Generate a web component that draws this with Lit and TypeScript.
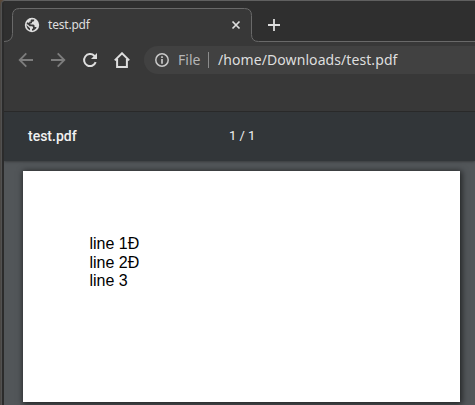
import { LitElement, html, css } from "lit";
import { customElement } from "lit/decorators.js";

@customElement("browser-tabs")
class BrowserTabs extends LitElement {
  static styles = css`
    :host { display: block; height: 41px; background: #2f2f2f; position: relative; }
    .outline { position: absolute; inset: 0; width: 471px; height: 41px; }
    .row { position: relative; display: flex; align-items: center; height: 41px; padding: 7px 0 0 20px; box-sizing: border-box; }
    .globe { width: 16px; height: 16px; flex: none; }
    .title { font: 12px/16px "Noto Sans", sans-serif; letter-spacing: -.2px; color: #dedede; margin-left: 8px; width: 182px; }
    .close { width: 10px; height: 10px; flex: none; margin-left: 1px; }
    .add { width: 12px; height: 12px; flex: none; margin-left: 27px; }
  `;
  render() {
    return html`
      <svg class="outline" viewBox="0 0 471 41">
        <path d="M0 40.5 Q8.5 40.5 8.5 32.5 V14.5 Q8.5 7.5 15.5 7.5 H240.5 Q247.5 7.5 247.5 14.5 V33.5 Q247.5 40.5 254.5 40.5 H471 V41 H0Z" fill="#383838"/>
        <path d="M0 40.5 Q8.5 40.5 8.5 32.5 V14.5 Q8.5 7.5 15.5 7.5 H240.5 Q247.5 7.5 247.5 14.5 V33.5 Q247.5 40.5 254.5 40.5 H471" fill="none" stroke="#696969"/>
      </svg>
      <div class="row">
        <svg class="globe" viewBox="0 0 16 16">
          <circle cx="8" cy="8" r="7.2" fill="#dedede"/>
          <path d="M7.3 2.4H10.2V3.6L9.2 4.8H8V6.2H6.5V7.4H9.4L10.6 8.6V10H12.6L12 11.6L9.9 13.3L8 13.8V12.2L9 11.2V10L8.2 9.2H5.6L3.9 7.6L2.5 7.2L3.2 5.2L5.2 6V4.7H6.6V3.2Z" fill="#383838"/>
          <path d="M2.4 8L6 11.2V13.2Q3.1 12.2 2.4 8Z" fill="#383838"/>
        </svg>
        <span class="title">test.pdf</span>
        <svg class="close" viewBox="0 0 10 10"><path d="M1.5 1.5 8.5 8.5 M8.5 1.5 1.5 8.5" stroke="#dedede" stroke-width="1.7"/></svg>
        <svg class="add" viewBox="0 0 12 12"><path d="M6 0V12M0 6H12" stroke="#dedede" stroke-width="1.8"/></svg>
      </div>`;
  }
}

@customElement("browser-toolbar")
class BrowserToolbar extends LitElement {
  static styles = css`
    :host { display: block; height: 69px; background: #383838; }
    .row { display: flex; align-items: center; padding-top: 4px; height: 28px; }
    .icon { width: 16px; height: 16px; flex: none; fill: none; stroke: #dedede; stroke-width: 2; margin-right: 16px; }
    .row .icon:first-child { margin-left: 14px; }
    .dim { stroke: #7d7d7d; stroke-width: 1.8; }
    .omnibox { flex: 1; display: flex; align-items: center; height: 28px; margin-left: -2px; border-radius: 14px 0 0 14px; background: #414141; font: 14px/20px "Noto Sans", sans-serif; color: #dedede; white-space: nowrap; }
    .info { width: 14px; height: 14px; flex: none; margin-left: 11px; }
    .scheme { color: #b5b5b5; margin-left: 9px; width: 30px; }
    .bar { width: 1px; height: 16px; background: #8b8b8b; margin-right: 9px; }
    .url { letter-spacing: .08px; }
  `;
  render() {
    return html`
      <div class="row">
        <svg class="icon dim" viewBox="0 0 16 16"><path d="M15 8H2M8.3 1.4 1.7 8l6.6 6.6"/></svg>
        <svg class="icon dim" viewBox="0 0 16 16"><path d="M1 8H14M7.7 1.4 14.3 8l-6.6 6.6"/></svg>
        <svg class="icon" viewBox="0 0 16 16"><path d="M13.7 10.2A6 6 0 1 1 12.3 3.8L13.4 5"/><path d="M15 1V7H9Z" fill="#dedede" stroke="none"/></svg>
        <svg class="icon" viewBox="0 0 16 16"><path d="M.8 8.4 8 1.3l7.2 7.1M3.1 7V15H12.9V7"/></svg>
        <div class="omnibox">
          <svg class="info" viewBox="0 0 14 14"><circle cx="7" cy="7" r="6.2" fill="none" stroke="#c8c8c8" stroke-width="1.5"/><path d="M7 3.2V4.9M7 6V10.8" stroke="#c8c8c8" stroke-width="1.7"/></svg>
          <span class="scheme">File</span><span class="bar"></span><span class="url">/home/Downloads/test.pdf</span>
        </div>
      </div>`;
  }
}

@customElement("pdf-viewer")
class PdfViewer extends LitElement {
  static styles = css`
    :host { display: flex; flex-direction: column; flex: 1; background: #525659; border-top: 1px solid #292929; overflow: hidden; }
    .head { height: 49px; flex: none; display: flex; align-items: center; background: #323639; color: #f1f1f1; box-shadow: 0 0 3px rgba(0, 0, 0, .55); font: 500 14px/20px Roboto, sans-serif; }
    .name { margin-left: 24px; width: 201px; padding-bottom: 1px; }
    .count { font-size: 13px; font-weight: 400; padding-bottom: 1px; }
    .page { width: 437px; height: 231px; flex: none; box-sizing: border-box; margin: 10px 0 0 19px; padding: 64px 0 0 66.5px; background: #fff; box-shadow: 1px 1px 6px 1px rgba(0, 0, 0, .6); color: #000; font: 16px/18.5px "Liberation Sans", sans-serif; }
  `;
  render() {
    return html`
      <div class="head"><span class="name">test.pdf</span><span class="count">1 / 1</span></div>
      <div class="page">${["line 1Đ", "line 2Đ", "line 3"].map((t) => html`<div>${t}</div>`)}</div>`;
  }
}

@customElement("app-root")
class AppRoot extends LitElement {
  static styles = css`
    :host { display: block; width: 475px; height: 405px; overflow: hidden; background: linear-gradient(#5b4938, #4a4744 8px, #4a4744); }
    .window { height: 405px; margin-left: 1px; box-sizing: border-box; display: flex; flex-direction: column; border-top: 1px solid #606060; border-left: 1px solid #515151; border-radius: 4px 0 0 0; padding-left: 2px; background: #2b2b2b; overflow: hidden; }
  `;
  render() {
    return html`<div class="window"><browser-tabs></browser-tabs><browser-toolbar></browser-toolbar><pdf-viewer></pdf-viewer></div>`;
  }
}
